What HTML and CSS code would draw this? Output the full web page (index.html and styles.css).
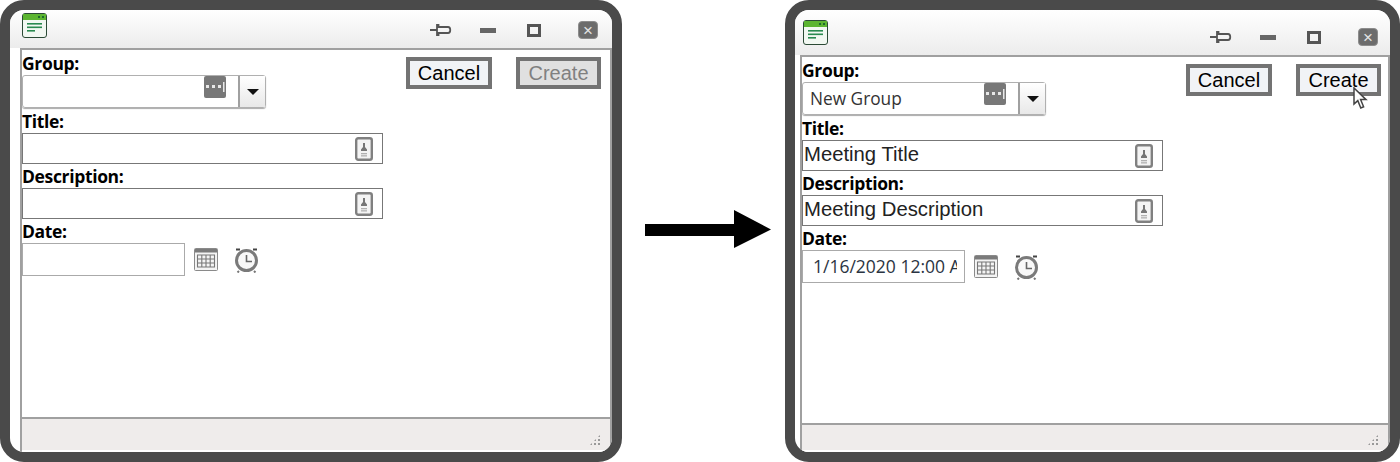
FILE: index.html
```html
<!DOCTYPE html>
<html lang="en">
<head>
    <meta charset="UTF-8">
    <title>Create Meeting</title>
    <link rel="stylesheet" href="styles.css">
</head>
<body>
    <svg class="sprites" width="0" height="0">
        <symbol id="icon-app" viewBox="0 0 25 25">
            <rect x="0.5" y="0.5" width="24" height="24" rx="2.5" fill="#f2f8f2" stroke="#2b4a35"/>
            <rect x="1" y="1" width="23" height="6" fill="#5cb531"/>
            <rect x="16" y="3" width="2" height="2" fill="#1d6b2c"/>
            <rect x="20" y="3" width="2" height="2" fill="#1d6b2c"/>
            <rect x="5" y="10" width="15" height="1.6" fill="#2a8a50"/>
            <rect x="5" y="13.5" width="15" height="1.6" fill="#2a8a50"/>
            <rect x="5" y="17" width="8" height="1.6" fill="#2a8a50"/>
        </symbol>
        <symbol id="icon-pin" viewBox="0 0 22 14">
            <path d="M0 7H7M7 2H8.5V4H18C21 4 21 10 18 10H8.5V12H7Z" fill="none" stroke="#555" stroke-width="1.8"/>
        </symbol>
        <symbol id="icon-dots" viewBox="0 0 22 22">
            <rect width="22" height="22" rx="2" fill="#787878"/>
            <rect x="2" y="9" width="3" height="3" fill="#e8e8e8"/>
            <rect x="8" y="9" width="3" height="3" fill="#e8e8e8"/>
            <rect x="14" y="9" width="3" height="3" fill="#e8e8e8"/>
            <rect x="19" y="6" width="1.5" height="10" fill="#e8e8e8"/>
        </symbol>
        <symbol id="icon-text" viewBox="0 0 18 24">
            <rect x="1.2" y="1.2" width="15.6" height="21.6" rx="2" fill="#f4f4f4" stroke="#808080" stroke-width="2.4"/>
            <path d="M8 6H10V10L12 12.5V14H6V12.5L8 10Z" fill="#767676"/>
            <rect x="6" y="16" width="6" height="1.3" fill="#b0b0b0"/>
            <rect x="6" y="18.2" width="6" height="1.3" fill="#b0b0b0"/>
        </symbol>
        <symbol id="icon-calendar" viewBox="0 0 24 23">
            <rect x="0.5" y="0.5" width="23" height="22" rx="1" fill="#f4f4f4" stroke="#8a8a8a"/>
            <rect x="1" y="1" width="22" height="3.5" fill="#7b7b7b"/>
            <path d="M3.5 7H20.5V19H3.5ZM3.5 11H20.5M3.5 15H20.5M7.8 7V19M12 7V19M16.2 7V19" fill="none" stroke="#777" stroke-width="1.1"/>
        </symbol>
        <symbol id="icon-clock" viewBox="0 0 25 26">
            <circle cx="12.5" cy="13.5" r="10" fill="#f8f8f8" stroke="#7a7a7a" stroke-width="3"/>
            <path d="M12.5 8V14.5H18" fill="none" stroke="#666" stroke-width="1.6"/>
            <path d="M2 2.5H6M19 2.5H23" fill="none" stroke="#444" stroke-width="2"/>
            <path d="M5 24L3.5 25.5M20 24L21.5 25.5" fill="none" stroke="#777" stroke-width="2"/>
        </symbol>
    </svg>

    <div class="scene">
        <div class="window window-before">
            <div class="titlebar">
                <svg class="app-icon"><use href="#icon-app"/></svg>
                <div class="title-controls">
                    <svg class="pin"><use href="#icon-pin"/></svg>
                    <span class="minimize"></span>
                    <span class="maximize"></span>
                    <span class="close">×</span>
                </div>
            </div>
            <div class="panel">
                <div class="form-area">
                    <div class="form-fields">
                        <label>Group:</label>
                        <div class="combo">
                            <div class="combo-text">
                                <span></span>
                                <svg class="dots"><use href="#icon-dots"/></svg>
                            </div>
                            <div class="combo-arrow"><i></i></div>
                        </div>
                        <label>Title:</label>
                        <div class="textbox">
                            <span></span>
                            <svg class="text-icon"><use href="#icon-text"/></svg>
                        </div>
                        <label>Description:</label>
                        <div class="textbox">
                            <span></span>
                            <svg class="text-icon"><use href="#icon-text"/></svg>
                        </div>
                        <label>Date:</label>
                        <div class="date-row">
                            <div class="date-input"></div>
                            <svg class="calendar"><use href="#icon-calendar"/></svg>
                            <svg class="clock"><use href="#icon-clock"/></svg>
                        </div>
                    </div>
                    <div class="actions">
                        <button class="cancel">Cancel</button>
                        <button class="create disabled">Create</button>
                    </div>
                </div>
                <div class="statusbar"><span class="grip"></span></div>
            </div>
        </div>

        <svg class="arrow" width="127" height="40" viewBox="0 0 127 40">
            <path d="M0 14H89V0L126 19.5L89 38V26H0Z" fill="#000"/>
        </svg>

        <div class="window window-after">
            <div class="titlebar">
                <svg class="app-icon"><use href="#icon-app"/></svg>
                <div class="title-controls">
                    <svg class="pin"><use href="#icon-pin"/></svg>
                    <span class="minimize"></span>
                    <span class="maximize"></span>
                    <span class="close">×</span>
                </div>
            </div>
            <div class="panel">
                <div class="form-area">
                    <div class="form-fields">
                        <label>Group:</label>
                        <div class="combo">
                            <div class="combo-text">
                                <span class="group-value">New Group</span>
                                <svg class="dots"><use href="#icon-dots"/></svg>
                            </div>
                            <div class="combo-arrow"><i></i></div>
                        </div>
                        <label>Title:</label>
                        <div class="textbox">
                            <span>Meeting Title</span>
                            <svg class="text-icon"><use href="#icon-text"/></svg>
                        </div>
                        <label>Description:</label>
                        <div class="textbox">
                            <span>Meeting Description</span>
                            <svg class="text-icon"><use href="#icon-text"/></svg>
                        </div>
                        <label>Date:</label>
                        <div class="date-row">
                            <div class="date-input"><span>1/16/2020 12:00 AM</span></div>
                            <svg class="calendar"><use href="#icon-calendar"/></svg>
                            <svg class="clock"><use href="#icon-clock"/></svg>
                        </div>
                    </div>
                    <div class="actions">
                        <button class="cancel">Cancel</button>
                        <button class="create">Create</button>
                        <svg class="cursor" width="16" height="23" viewBox="0 0 16 23">
                            <path d="M1 1V17L4.8 13.6L7.8 21L10.6 19.8L7.6 12.6H13Z" fill="#fff" stroke="#444" stroke-width="1.5"/>
                        </svg>
                    </div>
                </div>
                <div class="statusbar"><span class="grip"></span></div>
            </div>
        </div>
    </div>
</body>
</html>
```

FILE: styles.css
```css
* {
    margin: 0;
    padding: 0;
    box-sizing: border-box;
}

body {
    width: 1400px;
    height: 462px;
    overflow: hidden;
    background: white;
    font-family: "Liberation Sans", Arial, sans-serif;
}

.sprites {
    position: absolute;
}

.scene {
    display: flex;
    align-items: stretch;
    height: 462px;
}

.window {
    width: 622px;
    height: 462px;
    display: flex;
    flex-direction: column;
    border: 10px solid #4a4a4a;
    border-radius: 24px;
    background: #fff;
    overflow: hidden;
}

.window-after {
    width: 615px;
}

.arrow {
    flex: none;
    align-self: center;
    margin: -2px 13px 0 23px;
}

.titlebar {
    height: 38px;
    flex: none;
    display: flex;
    justify-content: space-between;
    padding: 3px 0 0 12px;
    background: linear-gradient(#fff, #ececec);
}

.window-after .titlebar {
    height: 45px;
    padding: 10px 0 0 8px;
}

.window-after .panel {
    margin-left: 5px;
}

.app-icon {
    width: 25px;
    height: 25px;
}

.title-controls {
    display: flex;
    align-items: center;
    height: 26px;
    padding-top: 8px;
    margin-right: 14px;
}

.window-after .title-controls {
    margin-right: 12px;
}

.pin {
    width: 22px;
    height: 14px;
    margin-right: 28px;
}

.minimize {
    width: 16px;
    height: 5px;
    background: #666;
    margin-right: 31px;
}

.maximize {
    width: 14px;
    height: 13px;
    border: 3px solid #555;
    margin-right: 37px;
}

.close {
    width: 20px;
    height: 18px;
    line-height: 17px;
    text-align: center;
    color: #e4e4e4;
    font-size: 17px;
    background: #6c6c6c;
    border: 1px solid #8c8c8c;
    border-radius: 4px;
}

.panel {
    flex: 1;
    min-height: 0;
    display: flex;
    flex-direction: column;
    margin: 0 0 0 10px;
    border-top: 2px solid #a0a0a0;
    border-left: 2px solid #a0a0a0;
    border-right: 2px solid #a0a0a0;
}

.form-area {
    flex: 1;
    display: flex;
    justify-content: space-between;
    padding: 4px 9px 0 0;
}

.window-after .form-area {
    padding-right: 7px;
}

.form-fields {
    width: 361px;
    display: flex;
    flex-direction: column;
}

label {
    font-family: "Open Sans", sans-serif;
    font-size: 17.5px;
    font-weight: 700;
    line-height: 18px;
    height: 21px;
    letter-spacing: -0.35px;
    color: #000;
}

.combo {
    width: 244px;
    height: 33px;
    display: flex;
    margin-bottom: 4px;
    border: 1px solid #b0b0b0;
    border-radius: 3px;
    box-shadow: 0 1px 1px #aaa;
}

.combo-text {
    flex: 1;
    display: flex;
    justify-content: space-between;
    padding-right: 12px;
    border-right: 2px solid #a0a0a0;
}

.group-value {
    font-family: "Open Sans", sans-serif;
    font-size: 17.3px;
    line-height: 31px;
    padding-left: 7px;
    color: #333;
}

.dots {
    width: 22px;
    height: 22px;
}

.combo-arrow {
    width: 25px;
    display: flex;
    align-items: center;
    justify-content: center;
    background: linear-gradient(#fff, #e8e8e8);
}

.combo-arrow i {
    border-top: 6px solid #111;
    border-left: 6px solid transparent;
    border-right: 6px solid transparent;
}

.textbox {
    height: 31px;
    display: flex;
    align-items: center;
    justify-content: space-between;
    padding: 0 9px 0 1px;
    margin-bottom: 3px;
    border: 1px solid #777;
    font-size: 20.3px;
    color: #222;
}

.textbox span {
    position: relative;
    top: -1px;
}

.text-icon {
    width: 18px;
    height: 24px;
}

.date-row {
    display: flex;
    align-items: center;
}

.date-input {
    width: 163px;
    height: 33px;
    padding: 0 7px 0 10px;
    border: 1px solid #aaa;
    font-family: "Open Sans", sans-serif;
    font-size: 17.5px;
    line-height: 31px;
    color: #2b3442;
}

.date-input span {
    display: block;
    overflow: hidden;
    white-space: nowrap;
}

.calendar {
    width: 24px;
    height: 23px;
    margin: 0 16px 0 9px;
}

.clock {
    width: 25px;
    height: 26px;
}

.actions {
    position: relative;
    display: flex;
    gap: 24px;
    margin-top: 3px;
}

.actions button {
    height: 32px;
    background: #f1f3f6;
    border: 4px solid #737373;
    font-family: "Liberation Sans", Arial, sans-serif;
    font-size: 20px;
    color: #000;
}

.actions .cancel {
    width: 86px;
}

.actions .create {
    width: 85px;
}

.actions .disabled {
    background: #e0e0e0;
    color: #808080;
}

.cursor {
    position: absolute;
    left: 167px;
    top: 23px;
}

.statusbar {
    height: 35px;
    flex: none;
    position: relative;
    border-top: 2px solid #a0a0a0;
    border-bottom: 2px solid #fff;
    background: #efeceb;
}

.window-after .statusbar {
    height: 29px;
}

.grip {
    position: absolute;
    right: 9px;
    bottom: 4px;
    width: 12px;
    height: 12px;
    background-image: radial-gradient(circle, #999 1px, transparent 1.4px);
    background-size: 4px 4px;
    clip-path: polygon(100% 0, 100% 100%, 0 100%);
}
```
